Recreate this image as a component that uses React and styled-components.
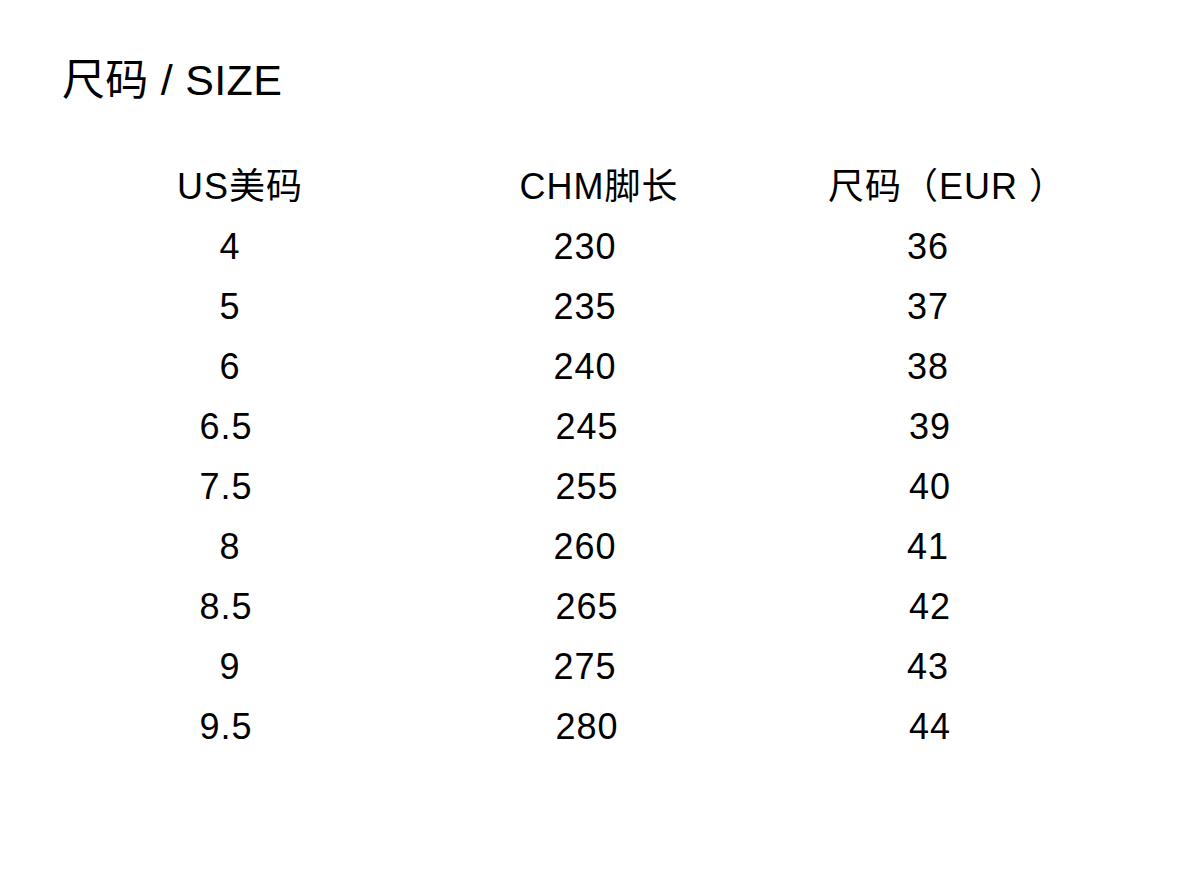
import React from 'react';
import styled, { createGlobalStyle } from 'styled-components';

const GlobalStyle = createGlobalStyle`
  html, body {
    margin: 0;
    padding: 0;
    background: #ffffff;
  }
  body {
    font-family: "Liberation Sans", Arial, "Noto Sans CJK SC", sans-serif;
    color: #000000;
  }
`;

const Page = styled.div`
  width: 1200px;
  height: 871px;
  background: #ffffff;
  padding-top: 59px;
  box-sizing: border-box;
`;

const Title = styled.h1`
  margin: 0;
  padding-left: 62px;
  font-size: 43px;
  line-height: 42px;
  font-weight: 400;
  letter-spacing: 0.3px;
`;

const Table = styled.div`
  margin-top: 56px;
  display: flex;
  flex-direction: column;
`;

const HeaderRow = styled.div`
  display: grid;
  grid-template-columns: 260px 458px 222px;
  padding-left: 110px;
  height: 60px;
  line-height: 60px;
  font-size: 36px;
  letter-spacing: 1px;
`;

const Row = styled.div`
  display: grid;
  grid-template-columns: 260px 450px 236px;
  padding-left: 100px;
  height: 60px;
  line-height: 60px;
  font-size: 36px;
  letter-spacing: 1px;
`;

const Cell = styled.div`
  text-align: center;
  white-space: pre;
  transform: translateX(${(p) => p.shift || 0}px);
`;

const sizes = [
  ['4', '230', '36'],
  ['5', '235', '37'],
  ['6', '240', '38'],
  ['6.5', '245', '39'],
  ['7.5', '255', '40'],
  ['8', '260', '41'],
  ['8.5', '265', '42'],
  ['9', '275', '43'],
  ['9.5', '280', '44'],
];

export default function App() {
  return (
    <Page>
      <GlobalStyle />
      <Title>尺码 / SIZE</Title>
      <Table>
        <HeaderRow>
          <Cell>US美码</Cell>
          <Cell>CHM脚长</Cell>
          <Cell>尺码（EUR ）</Cell>
        </HeaderRow>
        {sizes.map(([us, chm, eur]) => {
          const half = us.includes('.');
          return (
            <Row key={us}>
              <Cell shift={half ? -4 : 0}>{us}</Cell>
              <Cell shift={half ? 2 : 0}>{chm}</Cell>
              <Cell shift={half ? 2 : 0}>{eur}</Cell>
            </Row>
          );
        })}
      </Table>
    </Page>
  );
}
